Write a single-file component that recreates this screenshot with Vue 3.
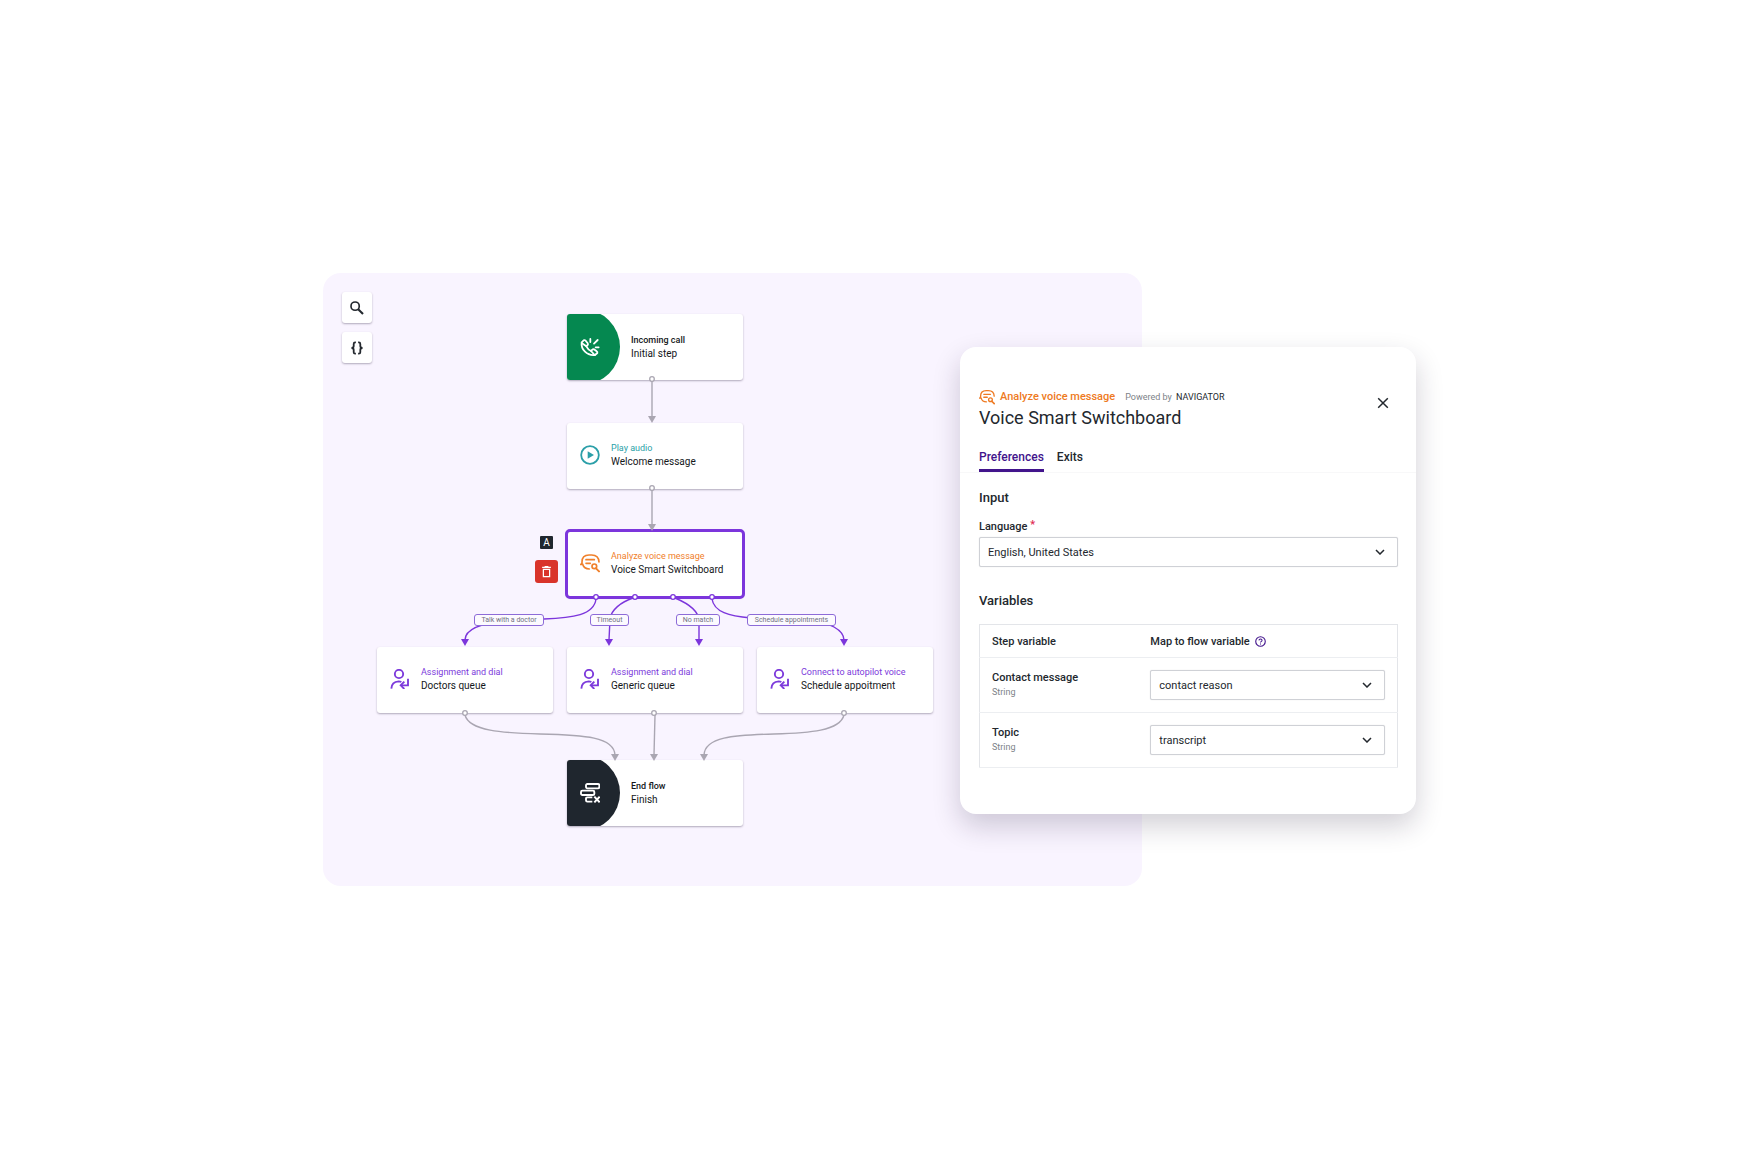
<template>
  <main class="page">
    <div class="stage">
      <section class="canvas" aria-label="Flow">
        <div class="toolbar">
          <button type="button" class="tool" aria-label="Search">
            <svg viewBox="0 0 24 24" width="18" height="18">
              <circle cx="9.5" cy="9.5" r="5.5" fill="none" stroke="currentColor" stroke-width="2.2" />
              <path d="M13.6 13.6 20 20" fill="none" stroke="currentColor" stroke-width="2.8" />
            </svg>
          </button>
          <button type="button" class="tool" aria-label="Variables">
            <svg viewBox="0 0 24 24" width="18" height="18" fill="none" stroke="currentColor" stroke-width="2.4">
              <path d="M10.5 4.5H9.6Q7.6 4.5 7.6 6.5V9.4Q7.6 12 4.6 12Q7.6 12 7.6 14.6V17.5Q7.6 19.5 9.6 19.5H10.5" />
              <path d="M13.5 4.5H14.4Q16.4 4.5 16.4 6.5V9.4Q16.4 12 19.4 12Q16.4 12 16.4 14.6V17.5Q16.4 19.5 14.4 19.5H13.5" />
            </svg>
          </button>
        </div>

        <article
          v-for="node in nodes"
          :key="node.id"
          class="node"
          :class="[node.kind, { selected: node.selected }]"
          :style="{ left: node.x + 'px', top: node.y + 'px' }"
        >
          <div class="node-icon">
            <svg v-if="node.icon === 'call'" viewBox="0 0 60 60" width="20" height="20" fill="none" stroke="currentColor" stroke-width="5.4" stroke-linejoin="round" stroke-linecap="round">
              <path d="M11 10 5 16Q3 33 15 44Q27 56 45 54L52 48Q53 45 50 43L42 37Q39 36 37 38L33 42Q24 38 19 28L23 24Q25 22 23 19L17 11Q14 8 11 10Z" />
              <path d="M6 19 19 28M33 42 44 54" />
              <path d="M31 6V15M53 9 42 20M56 31H47" />
            </svg>
            <svg v-else-if="node.icon === 'play'" viewBox="0 0 60 60" width="20" height="20">
              <circle cx="30" cy="30" r="26.5" fill="none" stroke="currentColor" stroke-width="5.4" />
              <path d="M23 19 42 30 23 41Z" fill="currentColor" />
            </svg>
            <svg v-else-if="node.icon === 'analyze'" viewBox="0 0 60 60" width="20" height="20" fill="none" stroke="currentColor" stroke-width="5" stroke-linecap="round">
              <path d="M57 27Q56 6 35 6H27Q6 6 6 27V30L3 34H8Q12 48 28 48" />
              <path d="M18 20H43M18 31H31" />
              <circle cx="43" cy="40" r="7" />
              <path d="M48 46 57 55" stroke-width="6" />
            </svg>
            <svg v-else-if="node.icon === 'assign'" viewBox="0 0 60 60" width="20" height="20" fill="none" stroke="currentColor" stroke-width="5.6">
              <circle cx="27" cy="15" r="12.5" />
              <path d="M4 59Q5 38 26 37Q31 37 34 39" />
              <path d="M54 29V49H34" />
              <path d="M43 38 32 49 43 60" />
            </svg>
            <svg v-else viewBox="0 0 60 60" width="20" height="20" fill="none" stroke="currentColor" stroke-width="5.6">
              <rect x="18" y="3" width="40" height="13" rx="4" />
              <rect x="3" y="23" width="40" height="13" rx="4" />
              <path d="M37 43H22Q18 43 18 47V52Q18 56 22 56H37" />
              <path d="M43 41 59 58M59 41 43 58" stroke-width="6" />
            </svg>
          </div>
          <div class="node-text">
            <p class="node-type">{{ node.type }}</p>
            <p class="node-name">{{ node.name }}</p>
          </div>
        </article>

        <svg class="links" width="819" height="614" aria-hidden="true">
          <g v-for="link in links" :key="link.id" :class="link.tone">
            <path class="wire" :d="link.path" />
            <path class="tip" :d="arrow(link.tip)" />
            <circle class="port" :cx="link.port[0]" :cy="link.port[1]" r="2.3" />
          </g>
        </svg>

        <span
          v-for="exit in exits"
          :key="exit.label"
          class="exit"
          :style="{ left: exit.x + 'px', width: exit.width + 'px' }"
        >{{ exit.label }}</span>

        <div class="node-actions">
          <span class="badge">A</span>
          <button type="button" class="delete" aria-label="Delete step">
            <svg viewBox="0 0 24 24" width="15" height="15" fill="none" stroke="currentColor" stroke-width="2">
              <path d="M5 5.5H19M9 4H15M7 8.5H17V20H7Z" />
            </svg>
          </button>
        </div>
      </section>

      <aside class="panel">
        <header class="panel-head">
          <div class="heading">
            <div class="caption">
              <svg class="caption-icon" viewBox="0 0 60 60" width="16" height="16" fill="none" stroke="currentColor" stroke-width="5" stroke-linecap="round">
                <path d="M57 27Q56 6 35 6H27Q6 6 6 27V30L3 34H8Q12 48 28 48" />
                <path d="M18 20H43M18 31H31" />
                <circle cx="43" cy="40" r="7" />
                <path d="M48 46 57 55" stroke-width="6" />
              </svg>
              <span class="caption-type">Analyze voice message</span>
              <span class="powered">Powered by <b>NAVIGATOR</b></span>
            </div>
            <h1>Voice Smart Switchboard</h1>
          </div>
          <button type="button" class="close" aria-label="Close">
            <svg viewBox="0 0 12 12" width="12" height="12">
              <path d="M1.2 1.2 10.8 10.8M10.8 1.2 1.2 10.8" stroke="currentColor" stroke-width="1.5" />
            </svg>
          </button>
        </header>

        <nav class="tabs">
          <button
            v-for="tab in tabs"
            :key="tab"
            type="button"
            class="tab"
            :class="{ active: tab === activeTab }"
            @click="activeTab = tab"
          >{{ tab }}</button>
        </nav>

        <div class="panel-body">
          <h2>Input</h2>
          <label class="field-label" for="language">Language <span class="required">*</span></label>
          <div class="select">
            <select id="language" v-model="language">
              <option>English, United States</option>
            </select>
            <svg class="chevron" viewBox="0 0 10 6" width="10" height="6"><path d="M1 1 5 5 9 1" /></svg>
          </div>

          <h2 class="variables-title">Variables</h2>
          <table class="variables">
            <thead>
              <tr>
                <th scope="col" class="step-col">Step variable</th>
                <th scope="col">
                  <span class="th-content">
                    Map to flow variable
                    <svg class="help" viewBox="0 0 12 12" width="11" height="11" fill="none" stroke="currentColor">
                      <circle cx="6" cy="6" r="5.2" stroke-width="1.2" />
                      <path d="M4.3 4.8Q4.4 3.2 6 3.2Q7.7 3.2 7.7 4.7Q7.7 5.5 6.7 6.1Q6 6.5 6 7.2M6 8.2V9.2" stroke-width="1.1" />
                    </svg>
                  </span>
                </th>
              </tr>
            </thead>
            <tbody>
              <tr v-for="row in variables" :key="row.id">
                <td>
                  <label class="var-name" :for="row.id">{{ row.name }}</label>
                  <span class="var-type">{{ row.type }}</span>
                </td>
                <td>
                  <div class="select">
                    <select :id="row.id" v-model="row.value">
                      <option v-for="option in flowVariables" :key="option">{{ option }}</option>
                    </select>
                    <svg class="chevron" viewBox="0 0 10 6" width="10" height="6"><path d="M1 1 5 5 9 1" /></svg>
                  </div>
                </td>
              </tr>
            </tbody>
          </table>
        </div>
      </aside>
    </div>
  </main>
</template>

<script setup>
import { ref } from 'vue'

const nodes = [
  { id: 'start', kind: 'edge start', icon: 'call', type: 'Incoming call', name: 'Initial step', x: 244, y: 41 },
  { id: 'play', kind: 'audio', icon: 'play', type: 'Play audio', name: 'Welcome message', x: 244, y: 150 },
  { id: 'switch', kind: 'analyze', icon: 'analyze', type: 'Analyze voice message', name: 'Voice Smart Switchboard', x: 244, y: 258, selected: true },
  { id: 'doctors', kind: 'assign', icon: 'assign', type: 'Assignment and dial', name: 'Doctors queue', x: 54, y: 374 },
  { id: 'generic', kind: 'assign', icon: 'assign', type: 'Assignment and dial', name: 'Generic queue', x: 244, y: 374 },
  { id: 'schedule', kind: 'assign', icon: 'assign', type: 'Connect to autopilot voice', name: 'Schedule appoitment', x: 434, y: 374 },
  { id: 'end', kind: 'edge end', icon: 'end', type: 'End flow', name: 'Finish', x: 244, y: 487 }
]

const links = [
  { id: 1, tone: 'grey', port: [329, 106], tip: [329, 150], path: 'M329 108V144' },
  { id: 2, tone: 'grey', port: [329, 215], tip: [329, 258], path: 'M329 217V252' },
  { id: 3, tone: 'violet', port: [273, 324], tip: [142, 373], path: 'M273 326C271 342 250 345 221 346L190 347C152 350 142 358 142 367' },
  { id: 4, tone: 'violet', port: [312, 324], tip: [286, 373], path: 'M310 325C298 329 288 337 287 346L286 367' },
  { id: 5, tone: 'violet', port: [350, 324], tip: [376, 373], path: 'M352 325C364 330 376 337 376 348V367' },
  { id: 6, tone: 'violet', port: [389, 324], tip: [521, 373], path: 'M389 326C391 339 406 343 428 345L480 347C508 348 521 358 521 367' },
  { id: 7, tone: 'grey', port: [142, 440], tip: [292, 488], path: 'M142 442C146 458 180 460 217 461C262 462 291 464 292 482' },
  { id: 8, tone: 'grey', port: [331, 440], tip: [331, 488], path: 'M332 442L331 482' },
  { id: 9, tone: 'grey', port: [521, 440], tip: [381, 488], path: 'M521 442C517 458 486 460 451 461C410 462 382 464 381 482' }
]

const exits = [
  { label: 'Talk with a doctor', x: 151, width: 70 },
  { label: 'Timeout', x: 267, width: 39 },
  { label: 'No match', x: 353, width: 44 },
  { label: 'Schedule appointments', x: 424, width: 89 }
]

const arrow = ([x, y]) => `M${x} ${y}L${x - 4} ${y - 7}H${x + 4}Z`

const tabs = ['Preferences', 'Exits']
const activeTab = ref('Preferences')
const language = ref('English, United States')

const flowVariables = ['contact reason', 'transcript']
const variables = ref([
  { id: 'contact-message', name: 'Contact message', type: 'String', value: 'contact reason' },
  { id: 'topic', name: 'Topic', type: 'String', value: 'transcript' }
])
</script>

<style>
body {
  margin: 0;
  background: #fff;
}
</style>

<style scoped>
* {
  box-sizing: border-box;
}

.page {
  min-height: 100vh;
  display: flex;
  align-items: center;
  justify-content: center;
  padding: 0 1px 1px 0;
  font-family: Roboto, "Liberation Sans", sans-serif;
  color: #23282e;
}

button,
select {
  font-family: inherit;
  color: inherit;
}

button {
  padding: 0;
  border: 0;
  background: none;
  cursor: pointer;
}

svg {
  display: block;
}

h1,
h2,
p {
  margin: 0;
}

.stage {
  width: 100%;
  max-width: 1093px;
  display: grid;
  grid-template-columns: 637fr 182fr 274fr;
  align-items: center;
}

/* Flow canvas */
.canvas {
  grid-column: 1 / 3;
  grid-row: 1;
  position: relative;
  min-height: 613px;
  border-radius: 18px;
  background: #f9f4ff;
}

.toolbar {
  display: flex;
  flex-direction: column;
  align-items: flex-start;
  gap: 9px;
  padding: 19px;
}

.tool {
  display: grid;
  place-items: center;
  width: 30px;
  height: 31px;
  border-radius: 3px;
  background: #fff;
  box-shadow: 0 1px 2px rgba(40, 30, 60, 0.35);
}

.node {
  position: absolute;
  display: flex;
  align-items: center;
  gap: 11px;
  width: 176px;
  height: 66px;
  padding: 0 0 2px 13px;
  border-radius: 3px;
  background: #fff;
  box-shadow: 0 1px 2px rgba(40, 30, 60, 0.35);
}

.node.selected {
  outline: 3px solid #7c35dc;
  outline-offset: -1px;
}

.node-type {
  font-size: 9px;
  line-height: 13px;
}

.node-name {
  font-size: 10px;
  line-height: 13px;
  color: #14171a;
}

.audio .node-icon,
.audio .node-type {
  color: #2b9fa8;
}

.analyze .node-icon,
.analyze .node-type {
  color: #f0802b;
}

.assign .node-icon,
.assign .node-type {
  color: #7c3adb;
}

.edge {
  padding: 0;
}

.edge .node-icon {
  display: flex;
  align-items: center;
  width: 53px;
  height: 66px;
  padding-left: 13px;
  border-radius: 3px 0 0 3px;
  clip-path: circle(38px at 15px 50%);
  color: #fff;
}

.start .node-icon {
  background: #058850;
}

.end .node-icon {
  background: #1f262e;
}

.edge .node-type {
  font-weight: 500;
  color: #14171a;
}

.links {
  position: absolute;
  top: 0;
  left: 0;
}

.wire {
  fill: none;
  stroke-width: 1.4;
}

.port {
  fill: #fff;
  stroke-width: 1.3;
}

.grey .wire,
.grey .port {
  stroke: #aaa6b2;
}

.grey .tip {
  fill: #aaa6b2;
}

.violet .wire,
.violet .port {
  stroke: #7c35dc;
}

.violet .tip {
  fill: #7c35dc;
}

.exit {
  position: absolute;
  top: 341px;
  height: 12px;
  border: 1px solid #8d6bd8;
  border-radius: 3px;
  background: #fcfaff;
  color: #717182;
  font-size: 7px;
  line-height: 10px;
  text-align: center;
  white-space: nowrap;
}

.node-actions {
  position: absolute;
  top: 263px;
  left: 212px;
  display: flex;
  flex-direction: column;
  align-items: center;
  gap: 11px;
}

.badge {
  width: 13px;
  height: 13px;
  border-radius: 1px;
  background: #1f262e;
  color: #fff;
  font-size: 10px;
  line-height: 13px;
  text-align: center;
}

.delete {
  display: grid;
  place-items: center;
  width: 23px;
  height: 23px;
  border-radius: 3px;
  background: #d9342b;
  color: #fff;
}

/* Step settings */
.panel {
  grid-column: 2 / 4;
  grid-row: 1;
  position: relative;
  margin-top: 2px;
  border-radius: 16px;
  background: #fff;
  box-shadow: 0 12px 28px rgba(30, 20, 50, 0.2);
}

.panel-head {
  display: flex;
  justify-content: space-between;
  align-items: flex-start;
  padding: 43px 27px 0 19px;
}

.caption {
  display: flex;
  align-items: center;
  height: 14px;
  margin-bottom: 2px;
  font-size: 9px;
  line-height: 14px;
}

.caption-icon {
  margin-right: 5px;
  color: #ee7a22;
}

.caption-type {
  margin-right: 10px;
  font-size: 11px;
  font-weight: 500;
  color: #ee7a22;
}

.powered {
  color: #7d8288;
}

.powered b {
  margin-left: 2px;
  font-weight: 400;
  color: #23282e;
}

h1 {
  font-size: 18px;
  line-height: 24px;
  font-weight: 400;
}

.close {
  margin-top: 7px;
}

.tabs {
  display: flex;
  gap: 13px;
  margin-top: 20px;
  padding: 0 19px;
  border-bottom: 1px solid #f8f8f9;
}

.tab {
  padding-bottom: 4px;
  border-bottom: 3px solid transparent;
  font-size: 12px;
  line-height: 15px;
  font-weight: 500;
}

.tab.active {
  border-bottom-color: #42148c;
  color: #42148c;
}

.panel-body {
  padding: 17px 18px 46px 19px;
}

h2 {
  font-size: 13px;
  line-height: 16px;
  font-weight: 500;
}

.field-label {
  display: block;
  margin: 13px 0 3px;
  font-size: 11px;
  line-height: 14px;
  font-weight: 500;
}

.required {
  line-height: 1;
  vertical-align: 2px;
  color: #e0284f;
}

.select {
  display: grid;
  align-items: center;
}

.select select {
  grid-area: 1 / 1;
  width: 100%;
  height: 30px;
  padding: 0 28px 0 8px;
  border: 1px solid #cfd1d6;
  border-radius: 2px;
  background: #fff;
  box-shadow: 0 0 1px #cfd1d6;
  font-size: 11px;
  appearance: none;
}

.chevron {
  grid-area: 1 / 1;
  justify-self: end;
  margin-right: 13px;
  fill: none;
  stroke: #23282e;
  stroke-width: 1.5;
  pointer-events: none;
}

.variables-title {
  margin: 26px 0 15px;
}

.variables {
  width: 100%;
  border-collapse: collapse;
  border: 1px solid #e3e5e9;
  table-layout: fixed;
  font-size: 11px;
}

.variables tr {
  height: 55px;
  border-bottom: 1px solid #eceef1;
}

.variables thead tr {
  height: 33px;
}

.variables th,
.variables td {
  padding: 0 12px;
  text-align: left;
  vertical-align: middle;
}

.variables th {
  font-weight: 500;
}

.step-col {
  width: 38%;
}

.th-content {
  display: flex;
  align-items: center;
  gap: 5px;
}

.help {
  color: #42148c;
}

.var-name,
.var-type {
  display: block;
  line-height: 14px;
}

.var-name {
  font-weight: 500;
}

.var-type {
  font-size: 9px;
  color: #7d8288;
}

@media (max-width: 1000px) {
  .stage {
    grid-template-columns: 819px;
    gap: 24px;
  }

  .canvas,
  .panel {
    grid-column: 1;
    grid-row: auto;
  }
}
</style>
